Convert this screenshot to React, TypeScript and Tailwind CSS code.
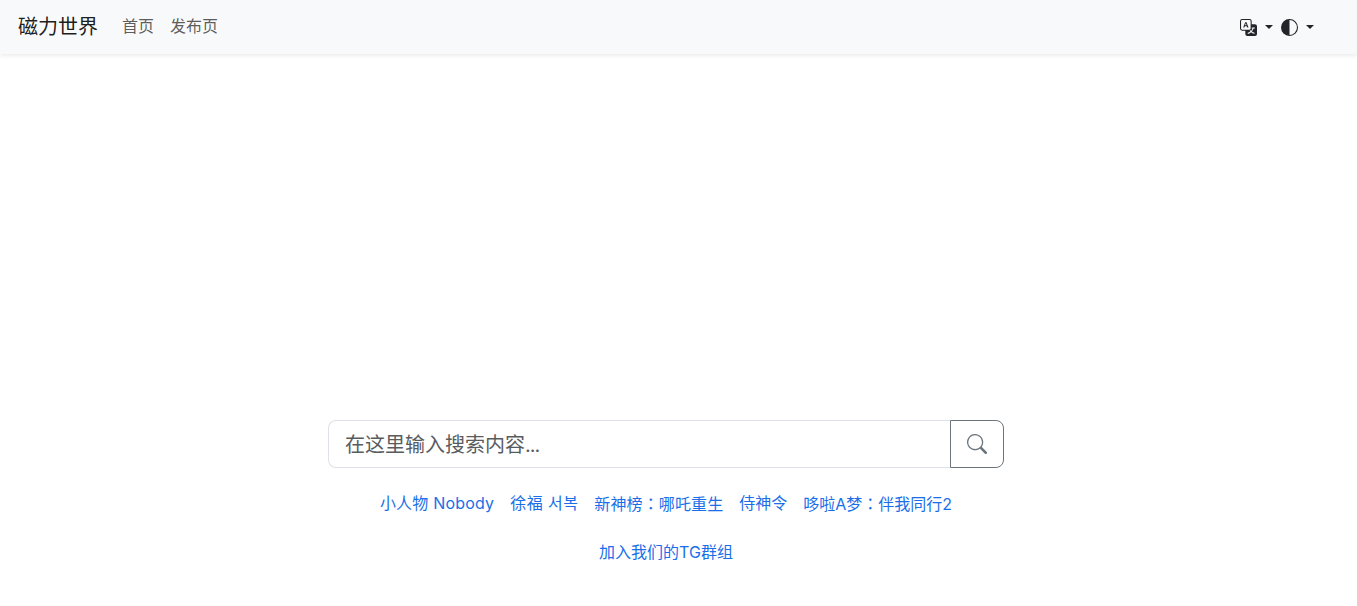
import React from 'react';

const Colon = () => <span className="font-['Noto_Sans_CJK_TC',sans-serif]">：</span>;

const Caret = () => (
  <span className="ml-2 w-0 h-0 border-x-4 border-x-transparent border-t-4 border-t-[#212529]"></span>
);

export default function App() {
  return (
    <div className="min-h-[606px] bg-white overflow-hidden font-['Inter','Noto_Sans_CJK_SC',sans-serif] text-[#212529]">
      {/* Navbar */}
      <nav className="h-[54px] bg-[#f8f9fa] shadow-[0_2px_4px_rgba(0,0,0,0.075)] flex items-center pl-[18px]">
        <a className="text-[20px] leading-[30px] text-[#000000e6] mr-4">磁力世界</a>
        <a className="px-2 pb-[3px] text-[16px] leading-6 text-[#000000a6]">首页</a>
        <a className="px-2 pb-[3px] text-[16px] leading-6 text-[#000000a6]">发布页</a>

        <div className="ml-auto mr-[43px] flex items-center gap-2">
          <div className="flex items-center">
            <svg width="17" height="17" viewBox="0 0 16 16" fill="#212529">
              <path d="M4.545 6.714 4.11 8H3l1.862-5h1.284L8 8H6.833l-.435-1.286H4.545zm1.634-.736L5.5 3.956h-.049l-.679 2.022H6.18z" />
              <path d="M0 2a2 2 0 0 1 2-2h7a2 2 0 0 1 2 2v3h3a2 2 0 0 1 2 2v7a2 2 0 0 1-2 2H7a2 2 0 0 1-2-2v-3H2a2 2 0 0 1-2-2V2zm2-1a1 1 0 0 0-1 1v7a1 1 0 0 0 1 1h7a1 1 0 0 0 1-1V2a1 1 0 0 0-1-1H2zm7.138 9.995c.193.301.402.583.63.846-.748.575-1.673 1.001-2.768 1.292.178.217.451.635.555.867 1.125-.359 2.08-.844 2.886-1.494.777.665 1.739 1.165 2.93 1.472.133-.254.414-.673.629-.89-1.125-.253-2.057-.694-2.82-1.284.681-.747 1.222-1.651 1.621-2.757H14V8h-3v1.047h.765c-.318.844-.74 1.546-1.272 2.13a6.066 6.066 0 0 1-.415-.492 1.988 1.988 0 0 1-.94.31z" />
            </svg>
            <Caret />
          </div>
          <div className="flex items-center">
            <svg width="17" height="17" viewBox="0 0 16 16" fill="#212529">
              <path d="M8 1A7 7 0 1 0 8 15V1zm0 15A8 8 0 1 1 8 0a8 8 0 0 1 0 16zm0-1A7 7 0 1 0 8 1a7 7 0 0 0 0 14z" fillRule="evenodd" />
            </svg>
            <Caret />
          </div>
        </div>
      </nav>

      {/* Search */}
      <main className="w-[1332px] flex flex-col items-center pt-[366px]">
        <div className="w-[676px] h-12 flex">
          <div className="flex-1 border border-[#dee2e6] border-r-0 rounded-l-lg pl-4 pt-[2px] flex items-center text-[20px] text-[#595c5f]">
            <span>在这里输入搜索内容<span className="tracking-[-1px]">...</span></span>
          </div>
          <button className="w-[54px] border border-[#6c757d] rounded-r-lg flex items-center justify-center">
            <svg width="20" height="20" viewBox="0 0 16 16" fill="#6c757d">
              <path d="M11.742 10.344a6.5 6.5 0 1 0-1.397 1.398h-.001c.03.04.062.078.098.115l3.85 3.85a1 1 0 0 0 1.415-1.414l-3.85-3.85a1.007 1.007 0 0 0-.115-.1zM12 6.5a5.5 5.5 0 1 1-11 0 5.5 5.5 0 0 1 11 0z" />
            </svg>
          </button>
        </div>

        <div className="mt-[23px] flex gap-4 text-[16px] leading-6 text-[#1a6fe8]">
          <a className="tracking-[0.2px]">小人物 Nobody</a>
          <a className="tracking-[0.4px]">徐福 서복</a>
          <a className="tracking-[0.12px]">新神榜<Colon />哪吒重生</a>
          <a>侍神令</a>
          <a>哆啦A梦<Colon />伴我同行2</a>
        </div>

        <a className="mt-6 text-[16px] leading-6 text-[#1a6fe8]">加入我们的TG群组</a>
      </main>
    </div>
  );
}
